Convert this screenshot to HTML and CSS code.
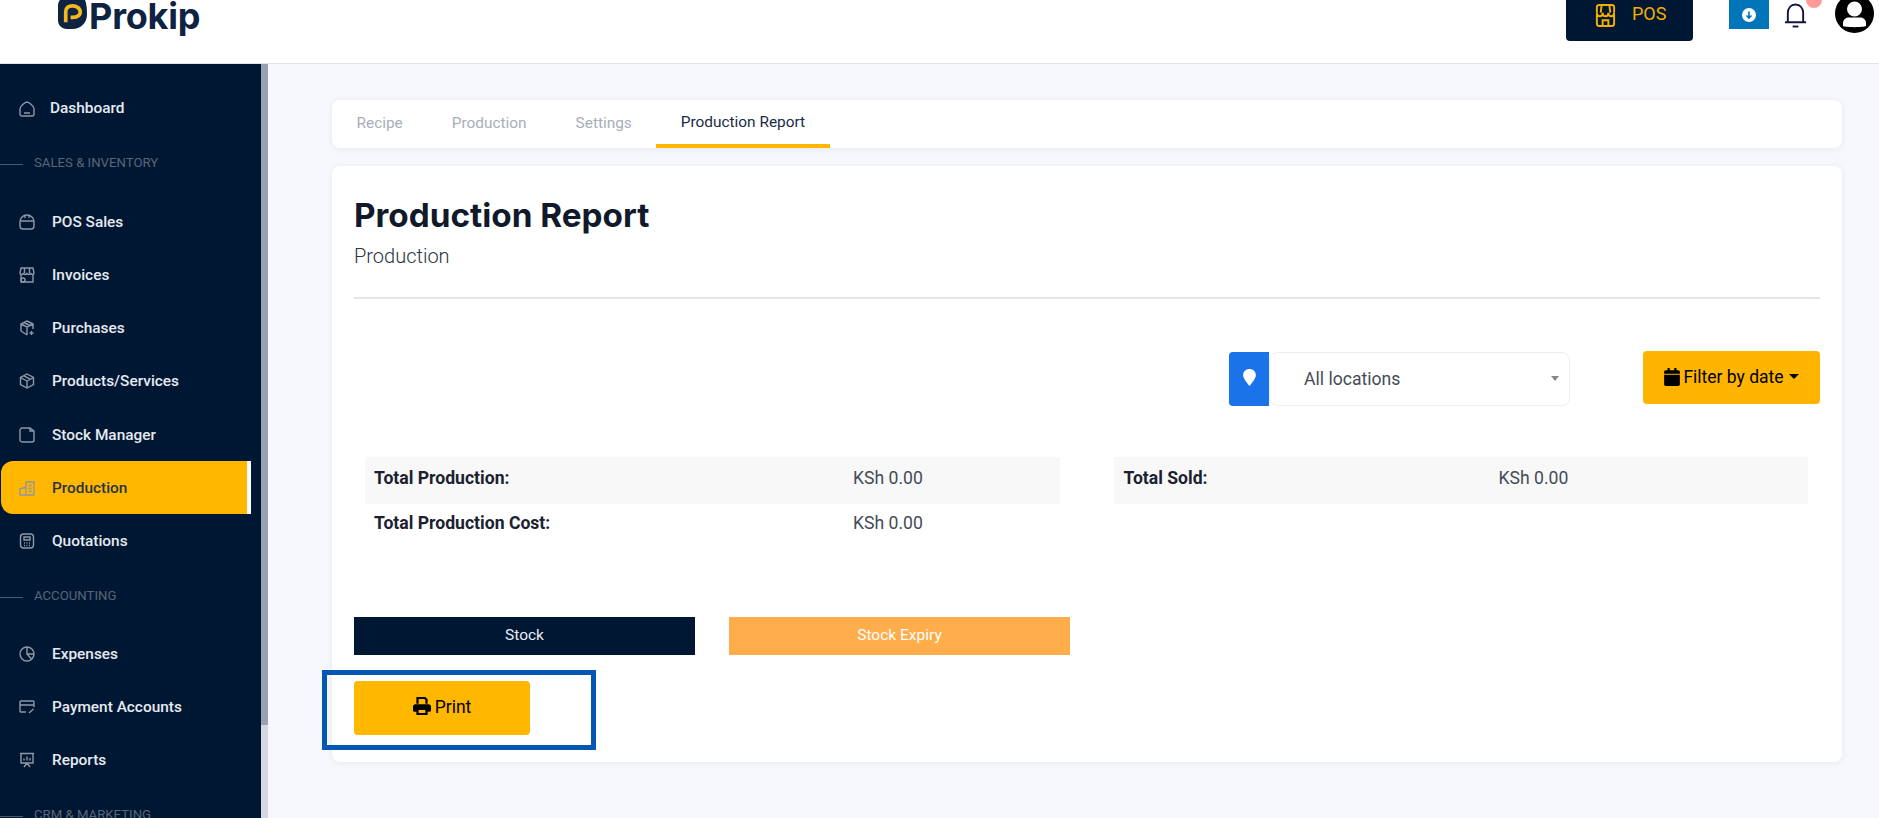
FILE: index.html
```html
<!DOCTYPE html>
<html lang="en">
  <head>
    <meta charset="UTF-8" />
    <meta name="viewport" content="width=device-width, initial-scale=1.0" />
    <title>Production Report</title>
    <link rel="stylesheet" href="styles.css">
  </head>
  <body>
    <header class="topbar">
      <div class="brand">
        <svg class="brandMark" viewBox="0 0 30 31"><path d="M2 0H28C29.500 4 30 9 30 15 30 24 23 30 15 30H9C4 30 0 26 0 21V6C0 3 1 1 2 0Z" fill="#0e2342"/><path d="M8 23V12C8 8 11 6 15 6S23 8.500 23 12.500 19.500 18 15 18H13" fill="none" stroke="#f5b81c" stroke-width="3.800"/></svg>
        <span class="brandName">Prokip</span>
      </div>
      <div class="topActions">
        <button class="posBtn">
          <svg class="posIcon" viewBox="0 0 24 24" fill="none" stroke="#f5ae00" stroke-width="2"><path d="M3 9V3.500C3 2 4 1 5.500 1H18.500C20 1 21 2 21 3.500V9"/><path d="M3 9C3 14 9 14 9 9 9 14 15 14 15 9 15 14 21 14 21 9"/><path d="M3 10V20C3 21.500 4 23 5.500 23H18.500C20 23 21 21.500 21 20V10"/><path d="M9 23V17H15V23M8 1 7 9M16 1 17 9"/></svg>
          <span>POS</span>
        </button>
        <button class="downloadBtn">
          <svg class="downloadIcon" viewBox="0 0 14 14"><circle cx="7" cy="7" r="7" fill="#fff"/><path d="M7 3.500V10M4.500 7.500 7 10 9.500 7.500" fill="none" stroke="#0075b8" stroke-width="1.600"/></svg>
        </button>
        <div class="bell">
          <svg class="bellIcon" viewBox="0 0 24 25" fill="none" stroke="#14163f" stroke-width="2"><path d="M4 19V10C4 5 7 1 12 1S20 5 20 10V19M1 19.500H23"/><path d="M9 24H15"/></svg>
          <span class="bellDot"></span>
        </div>
        <svg class="avatar" viewBox="0 0 39 39"><circle cx="19.500" cy="19.500" r="19.500" fill="#000"/><circle cx="19.500" cy="15" r="7.500" fill="#fff"/><path d="M8 32V29C8 25.500 11 23.500 14 23.500H25C28 23.500 31 25.500 31 29V32C28 33.500 11 33.500 8 32Z" fill="#fff"/></svg>
      </div>
    </header>

    <div class="layout">
      <nav class="sidebar">
        <a class="navItem navItem-dash">
          <svg class="navIcon" viewBox="0 0 16 16"><path d="M1 7.500C1 5.500 6 1 8 1S15 5.500 15 7.500V13C15 14.500 14 15 13 15H3C2 15 1 14.500 1 13ZM5 12H11"/></svg>
          <span>Dashboard</span>
        </a>
        <div class="navSection"><i></i><span>SALES &amp; INVENTORY</span></div>
        <a class="navItem">
          <svg class="navIcon" viewBox="0 0 16 16"><path d="M1 8C1 4 4 1 8 1S15 4 15 8V12C15 14 14 15 12 15H4C2 15 1 14 1 12ZM1 7H15M6 1V4M10 1V4"/></svg>
          <span>POS Sales</span>
        </a>
        <a class="navItem">
          <svg class="navIcon" viewBox="0 0 16 16"><path d="M2 1H14L15 6C15 8 12 8 11.500 6 11 8 8.500 8 8 6 7.500 8 5 8 4.500 6 4 8 1 8 1 6ZM2 8V15H14V8M5.500 1V6M10.500 1V6"/><circle cx="4" cy="13" r="2"/></svg>
          <span>Invoices</span>
        </a>
        <a class="navItem">
          <svg class="navIcon" viewBox="0 0 16 16"><path d="M8 1 14 4V9M8 1 2 4V11L8 15M2 4 8 7 14 4M8 7V15M5 2.500 11 5.500M12.500 11V15M10.500 13H14.500"/></svg>
          <span>Purchases</span>
        </a>
        <a class="navItem">
          <svg class="navIcon" viewBox="0 0 16 16"><path d="M8 1 14.500 4.500V11.500L8 15 1.500 11.500V4.500ZM1.500 4.500 8 8 14.500 4.500M8 8V15M5 2.800 11 6.200"/></svg>
          <span>Products/Services</span>
        </a>
        <a class="navItem">
          <svg class="navIcon" viewBox="0 0 16 16"><path d="M1 3C1 2 2 1 3 1H11L15 4V13C15 14 14 15 13 15H3C2 15 1 14 1 13ZM11 1V4H15"/></svg>
          <span>Stock Manager</span>
        </a>
        <a class="navItem active">
          <svg class="navIcon" viewBox="0 0 16 16"><path d="M7 2H15V15H7ZM7 15H1V9L7 7M9.500 5.500H12.500M9.500 8.500H12.500M9.500 11.500H12.500"/></svg>
          <span>Production</span>
          <i class="activeEdge"></i>
        </a>
        <a class="navItem">
          <svg class="navIcon" viewBox="0 0 16 16"><path d="M1.500 4C1.500 2 2.500 1 4.500 1H11.500C13.500 1 14.500 2 14.500 4V12C14.500 14 13.500 15 11.500 15H4.500C2.500 15 1.500 14 1.500 12ZM5 4H11V7H5ZM5 10H6M7.500 10H8.500M10 10H11M5 12.500H6M7.500 12.500H8.500M10 12.500H11"/></svg>
          <span>Quotations</span>
        </a>
        <div class="navSection"><i></i><span>ACCOUNTING</span></div>
        <a class="navItem">
          <svg class="navIcon" viewBox="0 0 16 16"><circle cx="8" cy="8" r="7"/><path d="M8 1V8H15M8 8 12.500 13"/></svg>
          <span>Expenses</span>
        </a>
        <a class="navItem">
          <svg class="navIcon" viewBox="0 0 16 16"><path d="M7 13H2C1.500 13 1 12.500 1 12V3C1 2.500 1.500 2 2 2H14C14.500 2 15 2.500 15 3V8M1 6H15M10 14 14.500 10"/></svg>
          <span>Payment Accounts</span>
        </a>
        <a class="navItem">
          <svg class="navIcon" viewBox="0 0 16 16"><path d="M1 1.500H15M2 1.500V11H14V1.500M5 15 8 11 11 15M5 8.500V6.500M8 8.500V4.500M11 8.500V6"/></svg>
          <span>Reports</span>
        </a>
        <div class="navSection"><i></i><span>CRM &amp; MARKETING</span></div>
      </nav>
      <div class="sideScroll"><div class="sideThumb"></div></div>

      <main class="content">
        <div class="tabs">
          <a class="tab">Recipe</a>
          <a class="tab">Production</a>
          <a class="tab">Settings</a>
          <a class="tab tabActive">Production Report</a>
        </div>

        <section class="card">
          <h1 class="title">Production Report</h1>
          <p class="subtitle">Production</p>
          <hr class="divider" />

          <div class="filters">
            <div class="locationGroup">
              <span class="locationAddon">
                <svg class="pinIcon" viewBox="0 0 12 16"><path d="M6 0C2.500 0 0 2.500 0 5.800 0 9 4.500 14 6 16 7.500 14 12 9 12 5.800 12 2.500 9.500 0 6 0Z" fill="#fff"/></svg>
              </span>
              <div class="locationSelect">
                <span>All locations</span>
                <i class="selectCaret"></i>
              </div>
            </div>
            <button class="filterBtn">
              <svg class="faIcon" viewBox="0 0 14 16"><path d="M3 0H5V2H9V0H11V2H12.500C13.300 2 14 2.700 14 3.500V5H0V3.500C0 2.700 .7 2 1.500 2H3ZM0 6H14V14.500C14 15.300 13.300 16 12.500 16H1.500C.7 16 0 15.300 0 14.500Z"/></svg>
              <span>Filter by date</span>
              <i class="btnCaret"></i>
            </button>
          </div>

          <div class="totals">
            <table class="totalsTable totalsLeft">
              <tr><th>Total Production:</th><td>KSh 0.00</td></tr>
              <tr><th>Total Production Cost:</th><td>KSh 0.00</td></tr>
            </table>
            <table class="totalsTable totalsRight">
              <tr><th>Total Sold:</th><td>KSh 0.00</td></tr>
            </table>
          </div>

          <div class="stockTabs">
            <button class="stockTab">Stock</button>
            <button class="stockTab stockTabExpiry">Stock Expiry</button>
          </div>

          <div class="printRow">
            <button class="printBtn">
              <svg class="faIcon printIcon" viewBox="0 0 16 16"><path d="M3 0H11L13 2V6H11V2.500L10 1.800H5V6H3ZM2 6.500H14C15 6.500 16 7.500 16 8.500V12C16 12.500 15.500 13 15 13H13V16H3V13H1C.5 13 0 12.500 0 12V8.500C0 7.500 1 6.500 2 6.500ZM5 11.500V14.200H11V11.500Z"/></svg>
              <span>Print</span>
            </button>
            <div class="highlightFrame"></div>
          </div>
        </section>
      </main>
    </div>
  </body>
</html>
```

FILE: styles.css
```css
* {
  margin: 0;
  padding: 0;
  box-sizing: border-box;
}

html,
body {
  height: 100%;
  overflow: hidden;
}

body {
  font-family: Roboto, "Liberation Sans", sans-serif;
  background-color: #f7f8fd;
  color: #1a2b45;
}

button {
  border: none;
  font-family: inherit;
  cursor: pointer;
}

.topbar {
  height: 64px;
  background-color: #fff;
  border-bottom: 1px solid #e3e4e9;
  display: flex;
  justify-content: space-between;
  overflow: hidden;
}

.brand {
  display: flex;
  align-items: flex-start;
  margin-left: 58px;
  gap: 2px;
}

.brandMark {
  width: 29px;
  height: 30px;
}

.brandName {
  font-family: Inter, sans-serif;
  font-weight: 700;
  font-size: 36px;
  line-height: 32px;
  letter-spacing: -0.2px;
  color: #0e2342;
}

.topActions {
  display: flex;
  align-items: flex-start;
  margin-right: 5px;
}

.posBtn {
  width: 127px;
  height: 41px;
  background-color: #001733;
  color: #f5ae00;
  border-radius: 0 0 4px 4px;
  font-size: 18px;
  display: flex;
  align-items: flex-start;
  padding: 4px 0 0 28px;
  gap: 15px;
}

.posBtn span {
  line-height: 20px;
}

.posIcon {
  width: 23px;
  height: 23px;
}

.downloadBtn {
  width: 40px;
  height: 29px;
  margin-left: 36px;
  background-color: #0075b8;
  display: flex;
  align-items: center;
  justify-content: center;
}

.downloadIcon {
  width: 14px;
  height: 14px;
}

.bell {
  position: relative;
  width: 23px;
  height: 27px;
  margin: 3px 0 0 15px;
}

.bellIcon {
  width: 23px;
  height: 25px;
  display: block;
}

.bellDot {
  position: absolute;
  top: -11px;
  left: 22px;
  width: 16px;
  height: 16px;
  border-radius: 50%;
  background-color: #ff9a9a;
}

.avatar {
  width: 39px;
  height: 39px;
  margin: -6px 0 0 28px;
}

.layout {
  display: flex;
  height: 754px;
}

.sidebar {
  width: 261px;
  flex-shrink: 0;
  background-color: #001733;
  padding-top: 18px;
  overflow: hidden;
}

.navItem {
  height: 53.2px;
  display: flex;
  align-items: center;
  gap: 17px;
  padding-left: 19px;
  color: #e6eaf0;
  font-size: 15.4px;
  font-weight: 500;
  position: relative;
}

.navItem-dash {
  gap: 15px;
}

.navItem-dash span {
  margin-top: -1px;
}

.navIcon {
  width: 16px;
  height: 16px;
  flex-shrink: 0;
  fill: none;
  stroke: #8f98a6;
  stroke-width: 1.4;
}

.navItem.active {
  width: 250px;
  margin-left: 1px;
  padding-left: 18px;
  background-color: #ffb700;
  border-radius: 12px 0 0 12px;
  color: #2b3340;
}

.activeEdge {
  position: absolute;
  right: 0;
  top: 0;
  bottom: 0;
  width: 4px;
  background-color: #fff;
}

.navSection {
  height: 60px;
  padding-top: 20px;
  display: flex;
  gap: 11px;
  color: #5a6577;
  font-size: 13.2px;
  line-height: 16px;
}

.navSection i {
  display: block;
  width: 23px;
  height: 1px;
  margin-top: 9px;
  background-color: #4d586a;
}

.sideScroll {
  width: 7px;
  flex-shrink: 0;
  background-color: #d5d8df;
}

.sideThumb {
  height: 661px;
  background-color: #9aa1b0;
}

.content {
  flex: 1;
  padding: 36px 37px 0 64px;
}

.tabs {
  height: 48px;
  background-color: #fff;
  border-radius: 8px;
  box-shadow: 0 1px 6px rgba(30, 40, 80, 0.08);
  display: flex;
}

.tab {
  padding: 0 24.5px;
  font-size: 15.4px;
  line-height: 47px;
  color: #a8aeb9;
}

.tabActive {
  color: #1a2b45;
  line-height: 45px;
  border-bottom: 4px solid #ffb700;
}

.card {
  height: 596px;
  margin-top: 18px;
  padding: 29px 22px 0;
  background-color: #fff;
  border-radius: 8px;
  box-shadow: 0 1px 6px rgba(30, 40, 80, 0.08);
}

.title {
  font-family: Inter, sans-serif;
  font-weight: 700;
  font-size: 33.3px;
  line-height: 40px;
  color: #111a2b;
}

.subtitle {
  margin-top: 9px;
  font-size: 20px;
  font-weight: 300;
  line-height: 24px;
  color: #2c3440;
}

.divider {
  margin-top: 29px;
  border: none;
  height: 2px;
  background-color: #e4e5ea;
}

.filters {
  margin-top: 52px;
  display: flex;
  justify-content: flex-end;
  align-items: flex-start;
  gap: 73px;
}

.locationGroup {
  width: 341px;
  height: 54px;
  margin-top: 1px;
  display: flex;
}

.locationAddon {
  width: 40px;
  background-color: #1a73e8;
  border-radius: 4px 0 0 4px;
  display: flex;
  align-items: center;
  justify-content: center;
}

.pinIcon {
  width: 13px;
  height: 17px;
  margin-top: -4px;
}

.locationSelect {
  flex: 1;
  display: flex;
  align-items: center;
  justify-content: space-between;
  padding: 0 10px 0 34px;
  border: 1px solid #eceef2;
  border-radius: 8px;
  font-size: 17.6px;
  color: #444b57;
}

.selectCaret {
  width: 0;
  height: 0;
  border-left: 4px solid transparent;
  border-right: 4px solid transparent;
  border-top: 5px solid #888;
  margin-top: -2px;
}

.filterBtn {
  width: 177px;
  height: 53px;
  background-color: #ffb400;
  border-radius: 4px;
  color: #000;
  font-size: 17.5px;
  display: flex;
  align-items: center;
  justify-content: center;
  gap: 3px;
}

.filterBtn span {
  margin-top: -2px;
}

.faIcon {
  width: 16px;
  height: 18px;
  margin-top: -2px;
  fill: #000;
}

.printIcon {
  width: 18px;
}

.btnCaret {
  width: 0;
  height: 0;
  margin: -2px 0 0 2px;
  border-left: 5px solid transparent;
  border-right: 5px solid transparent;
  border-top: 5px solid #000;
}

.totals {
  margin-top: 51px;
  padding: 0 12px 0 11px;
  display: grid;
  grid-template-columns: 1fr 1fr;
  gap: 54px;
  height: 160px;
  align-items: start;
}

.totalsTable {
  width: 100%;
  border-collapse: collapse;
  font-size: 17.6px;
  color: #444b57;
}

.totalsTable th {
  text-align: left;
  color: #1a2230;
  font-weight: 700;
}

.totalsTable th,
.totalsTable td {
  height: 39px;
  padding: 0 9px 2px;
}

.totalsTable tr:first-child th,
.totalsTable tr:first-child td {
  height: 47px;
  padding-bottom: 5px;
  background-color: #f8f8f8;
}

.totalsLeft th {
  width: 479px;
}

.totalsRight th {
  width: 376px;
  padding-left: 10px;
}

.stockTabs {
  display: flex;
  gap: 34px;
}

.stockTab {
  width: 341px;
  height: 38px;
  padding-bottom: 2px;
  background-color: #001733;
  color: #e9edf3;
  font-size: 15.5px;
}

.stockTabExpiry {
  background-color: #ffad4a;
  color: #fff;
}

.printRow {
  position: relative;
  margin-top: 26px;
}

.printBtn {
  width: 176px;
  height: 54px;
  padding-bottom: 2px;
  background-color: #ffb700;
  border-radius: 4px;
  color: #000;
  font-size: 17.5px;
  display: flex;
  align-items: center;
  justify-content: center;
  gap: 4px;
}

.highlightFrame {
  position: absolute;
  left: -32px;
  top: -11px;
  width: 274px;
  height: 80px;
  border: 5px solid #0457b3;
  pointer-events: none;
}
```
